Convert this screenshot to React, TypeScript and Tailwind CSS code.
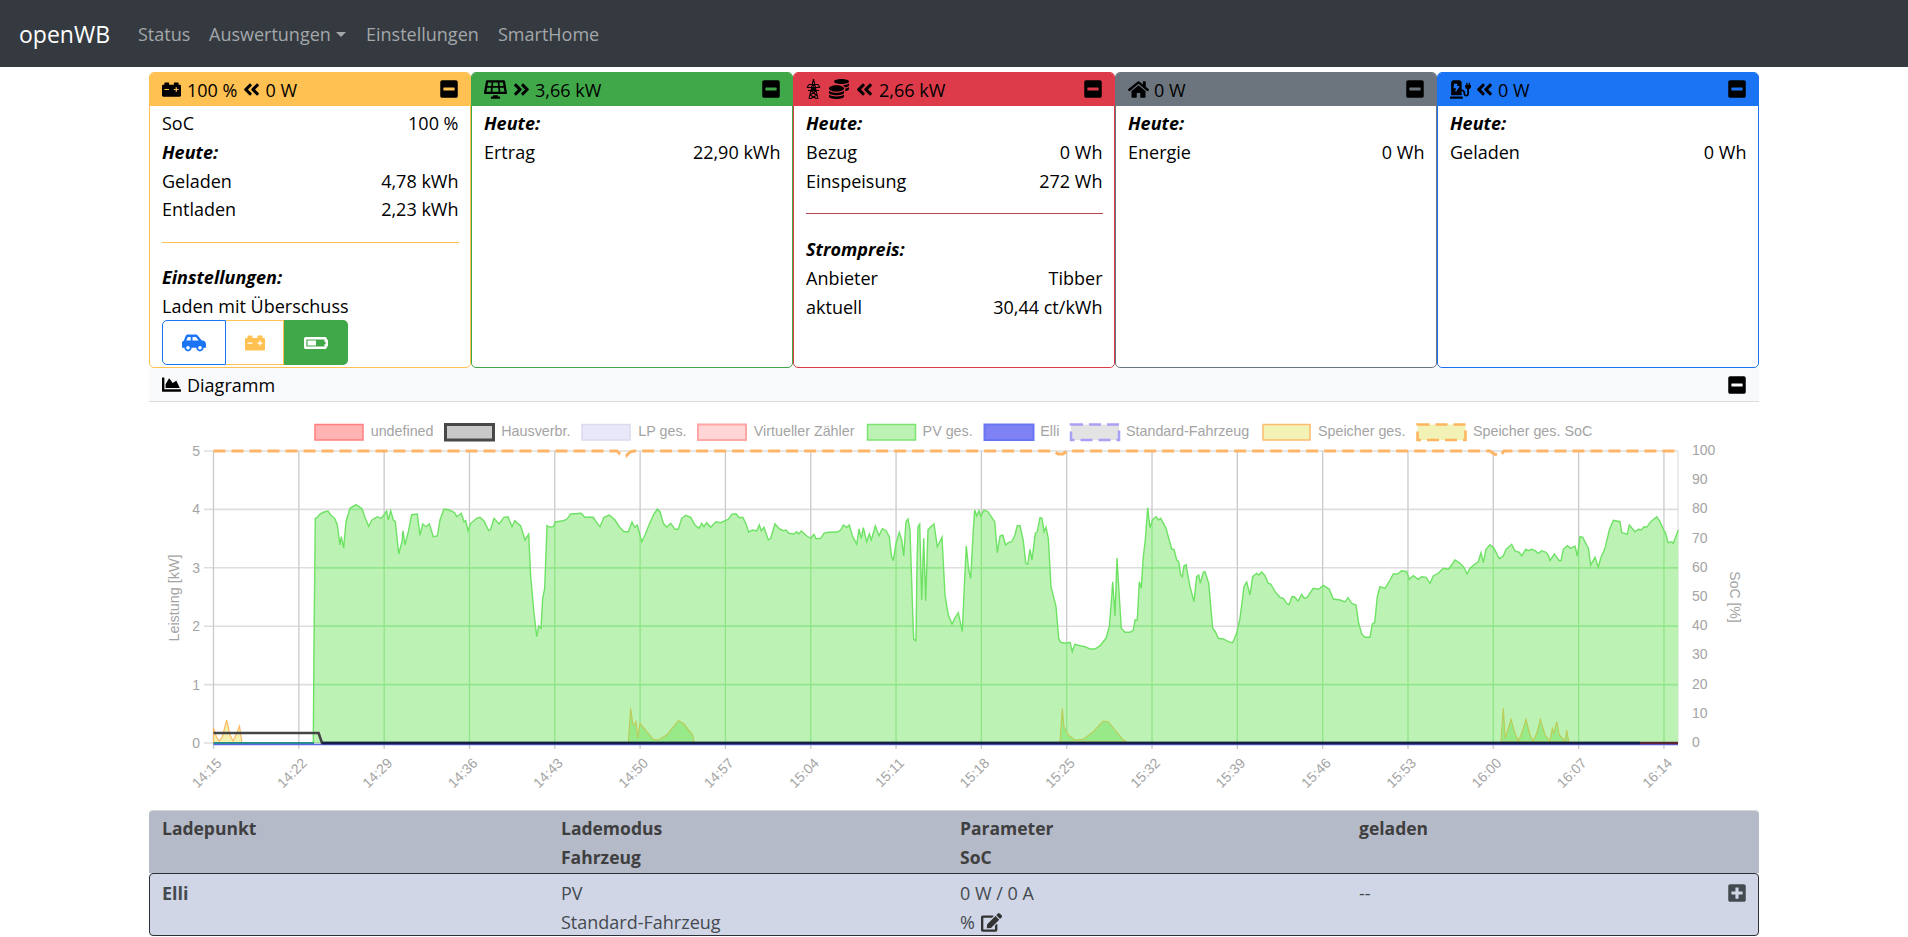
import React from "react";
import {
  FaCarBattery, FaAngleDoubleLeft, FaAngleDoubleRight, FaSolarPanel, FaCoins, FaHome,
  FaChargingStation, FaMinusSquare, FaPlusSquare, FaEdit, FaChartArea, FaCarSide, FaBatteryHalf,
} from "react-icons/fa";

type P = [number, number];
const conv = (pts: number[][], ox: number, oy: number): P[] => pts.map(([X, Y]) => [ox + X / 3, oy + Y / 3]);
const toPath = (p: P[]) => p.map(([x, y], i) => `${i ? "L" : "M"}${x.toFixed(1)} ${y.toFixed(1)}`).join("");

const pvA = [[40,999],[42,700],[46,325],[52,322],[60,312],[72,306],[84,303],[92,315],[104,325],[112,345],[120,405],[124,380],[131,414],[138,335],[150,295],[168,284],[186,296],[196,325],[206,349],[216,330],[232,320],[244,325],[260,303],[265,330],[272,302],[280,330],[286,334],[296,432],[306,395],[309,362],[315,405],[325,365],[335,314],[352,312],[360,376],[368,342],[378,350],[388,342],[400,380],[412,378],[420,330],[432,297],[448,300],[464,308],[470,320],[484,310],[492,335],[497,332],[504,362],[512,340],[530,325],[540,322],[552,333],[566,362],[572,358],[582,325],[597,342],[612,322],[624,320],[636,350],[644,332],[662,348],[675,390],[686,373],[692,500],[702,610],[710,680],[716,648],[723,655],[728,565],[734,535],[741,347],[750,352],[760,350],[766,336],[790,332],[800,328],[812,312],[844,310],[854,322],[880,322],[890,338],[900,350],[912,322],[928,315],[945,330],[958,350],[972,365],[985,365],[996,336],[1004,352],[1012,345],[1025,395],[1035,375],[1045,350],[1060,315],[1072,297],[1080,305],[1090,340],[1100,352],[1112,340],[1125,358],[1135,358],[1145,325],[1157,316],[1172,322],[1185,345],[1197,355]];
const pvB = [[65,130],[72,140],[80,128],[92,142],[108,125],[122,128],[135,122],[145,118],[155,103],[168,101],[178,113],[188,112],[197,130],[206,156],[218,150],[230,153],[238,135],[244,152],[252,142],[265,180],[272,175],[285,132],[298,146],[310,152],[318,150],[326,160],[342,162],[350,155],[356,162],[364,153],[380,168],[392,175],[402,163],[408,176],[422,175],[432,160],[445,157],[472,156],[482,150],[490,135],[500,142],[508,135],[518,170],[530,192],[537,147],[544,175],[550,143],[560,185],[568,162],[574,180],[586,138],[597,167],[607,146],[618,152],[628,170],[634,225],[640,242],[648,190],[658,157],[665,180],[671,228],[678,125],[684,117],[690,150],[698,400],[701,478],[708,482],[711,250],[714,140],[719,132],[725,360],[731,175],[737,362],[744,150],[752,140],[762,132],[772,200],[786,172],[795,345],[805,405],[816,432],[826,412],[835,398],[847,455],[853,320],[859,198],[866,270],[872,295],[880,150],[884,90],[890,108],[897,92],[902,108],[912,90],[924,95],[944,125],[952,218],[960,168],[968,165],[977,195],[985,188],[995,185],[1005,165],[1012,137],[1020,137],[1030,182],[1037,250],[1043,252],[1050,208],[1056,240],[1066,160],[1072,155],[1080,113],[1086,115],[1092,155],[1098,142],[1105,175],[1113,320],[1128,380],[1136,475],[1142,487],[1155,490],[1170,487],[1177,515],[1184,493],[1200,497]];
const pvC = [[75,500],[90,507],[105,507],[120,497],[138,475],[148,440],[155,350],[158,305],[165,408],[171,234],[178,350],[184,445],[195,457],[210,457],[220,450],[225,420],[232,420],[238,305],[244,325],[250,230],[256,180],[263,83],[270,143],[278,118],[288,110],[295,120],[302,115],[318,145],[335,207],[342,208],[350,240],[356,245],[362,285],[367,290],[372,258],[378,254],[390,320],[402,365],[410,290],[416,285],[421,310],[430,277],[435,275],[446,310],[458,445],[466,455],[475,475],[490,477],[505,485],[518,488],[530,460],[540,415],[552,320],[560,306],[570,345],[578,290],[590,280],[596,285],[605,276],[615,287],[625,310],[632,312],[645,335],[660,352],[670,355],[680,370],[687,374],[696,350],[703,350],[714,363],[725,343],[733,355],[741,352],[760,325],[776,328],[790,316],[808,328],[820,357],[840,360],[855,366],[864,353],[875,370],[888,375],[896,430],[905,462],[915,472],[930,472],[937,432],[944,428],[952,350],[960,320],[975,325],[990,300],[1000,282],[1012,282],[1025,272],[1040,275],[1048,298],[1060,287],[1075,298],[1085,290],[1098,292],[1110,310],[1120,288],[1135,280],[1150,265],[1165,268],[1175,255],[1185,240],[1200,250]];
const pvD = [[192,262],[201,282],[210,265],[225,252],[235,245],[243,218],[250,248],[258,208],[270,194],[282,205],[298,236],[310,228],[318,208],[335,193],[345,213],[358,217],[365,228],[377,208],[385,212],[395,208],[405,212],[415,220],[425,212],[438,217],[445,225],[450,242],[463,222],[478,242],[483,242],[490,208],[502,197],[512,205],[525,198],[532,228],[540,170],[548,172],[565,205],[572,255],[585,232],[595,262],[602,235],[615,205],[628,150],[640,121],[660,125],[665,158],[675,160],[682,163],[688,135],[705,155],[715,148],[724,150],[732,140],[740,142],[752,125],[770,110],[780,125],[792,152],[797,160],[804,188],[815,185],[820,190],[835,150]];

const pvLine: P[] = [...conv(pvA, 300, 410), ...conv(pvB, 680, 480), ...conv(pvC, 1060, 480), ...conv(pvD, 1400, 480)];
const pvArea = toPath(pvLine) + "L1678 743L313.3 743Z";

const hump0: P[] = [[213.5,743],[213.5,728],[216.5,737],[219,741],[222,738],[226.7,720],[230,735],[233,741],[236,735],[239.5,726],[242,743]];
const hump1 = conv([[985,999],[992,895],[998,940],[1003,945],[1008,935],[1013,985],[1020,940],[1040,965],[1060,988],[1075,990],[1100,975],[1135,932],[1150,940],[1178,975],[1183,999]], 300, 410);
const hump2 = conv([[0,785],[7,685],[12,740],[25,765],[45,780],[70,778],[100,755],[130,723],[145,725],[165,750],[190,780],[200,785]], 1060, 480);
const hump3 = conv([[303,785],[310,685],[316,775],[333,718],[345,760],[355,783],[365,760],[378,718],[390,765],[400,783],[410,760],[421,718],[435,765],[450,783],[457,745],[462,760],[470,725],[478,765],[495,783],[500,750],[506,785]], 1400, 480);

const gridY = [451, 509.4, 567.8, 626.2, 684.6, 743];
const times = ["14:15","14:22","14:29","14:36","14:43","14:50","14:57","15:04","15:11","15:18","15:25","15:32","15:39","15:46","15:53","16:00","16:07","16:14"];
const gridX = times.map((_, i) => 213.5 + i * 85.32);

const legend = [
  { x: 315, w: 48, fill: "#ffb3b3", stroke: "#ff7f7f", sw: 1.5, t: "undefined", tx: 370.7 },
  { x: 445.5, w: 48, fill: "#c9c9c9", stroke: "#484848", sw: 3, t: "Hausverbr.", tx: 501.3 },
  { x: 582, w: 48, fill: "#e9e7fa", stroke: "#dcdaf0", sw: 1.5, t: "LP ges.", tx: 638.3 },
  { x: 698, w: 48, fill: "#ffd5d5", stroke: "#ffa6a6", sw: 2, t: "Virtueller Zähler", tx: 753.8 },
  { x: 867.5, w: 48, fill: "#bdf2b5", stroke: "#7ce373", sw: 1.5, t: "PV ges.", tx: 922.6 },
  { x: 984.5, w: 49, fill: "#7f82f4", stroke: "#6a75f2", sw: 2, t: "Elli", tx: 1040.3 },
  { x: 1071, w: 48, fill: "#e3e3e3", stroke: "#a99ff5", sw: 2.5, t: "Standard-Fahrzeug", tx: 1126, dash: "12 6" },
  { x: 1263, w: 47, fill: "#f2f2b6", stroke: "#fdbb6e", sw: 1.5, t: "Speicher ges.", tx: 1318 },
  { x: 1417.5, w: 48, fill: "#f2f2b6", stroke: "#fdb55e", sw: 2.5, t: "Speicher ges. SoC", tx: 1473, dash: "12 6" },
];

function Chart() {
  const txt = "#a4a4a4";
  const f = "'Liberation Sans', Arial, sans-serif";
  return (
    <svg width={1610} height={408} viewBox="149 402 1610 408" className="block" style={{ fontFamily: f }}>
      <defs>
        <clipPath id="pvclip"><path d={pvArea} /></clipPath>
      </defs>
      {legend.map((l) => (
        <g key={l.t}>
          <rect x={l.x} y={424.5} width={l.w} height={15.5} fill={l.fill} stroke={l.stroke} strokeWidth={l.sw} strokeDasharray={l.dash} />
          <text x={l.tx} y={436} fontSize={14.3} fill={txt}>{l.t}</text>
        </g>
      ))}
      {gridY.map((y) => <line key={y} x1={204} x2={1678} y1={y} y2={y} stroke="#dedede" strokeWidth={1.6} />)}
      {gridX.map((x) => <line key={x} x1={x} x2={x} y1={451} y2={749} stroke="#cacaca" strokeWidth={1.3} />)}
      <line x1={1678} x2={1678} y1={451} y2={743} stroke="#d8d8d8" strokeWidth={1} />
      <path d={toPath(hump0) + "Z"} fill="#f3f0b0" stroke="#fdb964" strokeWidth={1.2} />
      <path d={pvArea} fill="#bdf2b5" />
      <g clipPath="url(#pvclip)">
        {gridY.map((y) => <line key={y} x1={204} x2={1678} y1={y} y2={y} stroke="#94e68e" strokeWidth={1.8} />)}
        {gridX.map((x) => <line key={x} x1={x} x2={x} y1={451} y2={749} stroke="#8fe488" strokeWidth={1.3} />)}
      </g>
      <path d={toPath(pvLine)} fill="none" stroke="#6ee264" strokeWidth={1.4} />
      {[hump1, hump2, hump3].map((h, i) => (
        <path key={i} d={toPath(h) + "Z"} fill="#98ea88" stroke="#bccb55" strokeWidth={1.1} />
      ))}
      <path d="M213.5 451L617 451L620 454L626 456L630 452L634 451L1054 451L1058 454L1063 454L1067 451L1490 451L1494 454L1500 456L1504 451L1678 451" fill="none" stroke="#fdb669" strokeWidth={3} strokeDasharray="12 6" />
      <line x1={213.5} x2={1678} y1={744.5} y2={744.5} stroke="#5f66e6" strokeWidth={1.5} />
      <line x1={213.5} x2={314} y1={743} y2={743} stroke="#2a8a90" strokeWidth={2} />
      <path d="M213.5 733L318.6 733L322 743L1640 743" fill="none" stroke="#444444" strokeWidth={2.6} />
      <line x1={322} x2={1640} y1={743} y2={743} stroke="#14204a" strokeWidth={2.6} />
      <line x1={1640} x2={1678} y1={743} y2={743} stroke="#5a2532" strokeWidth={2.6} />
      {[5,4,3,2,1,0].map((v, i) => (
        <text key={v} x={200} y={gridY[i] + 5} textAnchor="end" fontSize={14} fill={txt}>{v}</text>
      ))}
      {[100,90,80,70,60,50,40,30,20,10,0].map((v, i) => (
        <text key={v} x={1692} y={455 + i * 29.2} fontSize={14} fill={txt}>{v}</text>
      ))}
      <text transform="translate(179 598) rotate(-90)" textAnchor="middle" fontSize={14.4} fill={txt}>Leistung [kW]</text>
      <text transform="translate(1730 597) rotate(90)" textAnchor="middle" fontSize={14} fill={txt}>SoC [%]</text>
      {times.map((t, i) => (
        <text key={t} transform={`translate(${gridX[i] + 9} 764) rotate(-45)`} textAnchor="end" fontSize={14} fill={txt}>{t}</text>
      ))}
    </svg>
  );
}

function Tower() {
  return (
    <svg width="15" height="20" viewBox="0 0 15 20" fill="none" stroke="black" strokeWidth="1.1" className="shrink-0">
      <path d="M7.5 0L3 20M7.5 0L12 20M3 5.5H12M1 8.5H14M2 11.5H13M5.8 5.5L9.2 8.5M9.2 5.5L5.8 8.5M5.2 8.5L9.8 11.5M9.8 8.5L5.2 11.5M4.8 11.5L10.4 16M10.2 11.5L4.6 16M4.2 16L11 20M10.8 16L4 20M1 8.5L3 5.5M14 8.5L12 5.5" />
    </svg>
  );
}

function Row({ l, r }: { l: string; r: string }) {
  return (
    <div className="flex justify-between h-[28.8px]">
      <span>{l}</span>
      <span>{r}</span>
    </div>
  );
}

function Bold({ children }: { children: React.ReactNode }) {
  return <div className="h-[28.8px] font-bold italic">{children}</div>;
}

function T({ children, className }: { children: React.ReactNode; className: string }) {
  return <span className={`pt-[2px] ${className}`}>{children}</span>;
}

function Card({ head, border, bg, children }: { head: React.ReactNode; border: string; bg: string; children?: React.ReactNode }) {
  return (
    <div className={`flex flex-col rounded-[5px] border overflow-hidden ${border}`}>
      <div className={`h-[33px] shrink-0 flex items-center pt-[1px] pl-[12px] pr-[11px] border-b ${border} ${bg}`}>
        <div className="flex items-center flex-1 min-w-0">{head}</div>
        <FaMinusSquare size={20} className="shrink-0 mb-[2px]" />
      </div>
      <div className="pt-[3px] pl-[12px] pr-[11.5px]">{children}</div>
    </div>
  );
}

export default function App() {
  return (
    <div className="h-[937px] overflow-hidden bg-white text-black text-[18px] leading-[28.8px] font-['Open_Sans','Noto_Sans',sans-serif]">
      <nav className="h-[67px] bg-[#343a40] flex items-center pt-[2px] pl-[19px] text-[18px] text-[#a4a7aa]">
        <span className="w-[119px] text-white text-[23px]">openWB</span>
        <span className="w-[71px]">Status</span>
        <span className="w-[157px] flex items-center">
          Auswertungen
          <span className="ml-[5px] border-x-[5px] border-x-transparent border-t-[5.5px] border-t-[#a4a7aa]" />
        </span>
        <span className="w-[132px]">Einstellungen</span>
        <span>SmartHome</span>
      </nav>
      <main className="w-[1610px] ml-[149px] mt-[5px]">
        <div className="grid grid-cols-5 h-[296px]">
          <Card border="border-[#ffc252]" bg="bg-[#ffc252]" head={<>
            <FaCarBattery size={19} />
            <T className="ml-[6px]">100 %</T>
            <FaAngleDoubleLeft size={19} className="ml-[5px]" />
            <T className="ml-[4px]">0 W</T>
          </>}>
            <Row l="SoC" r="100 %" />
            <Bold>Heute:</Bold>
            <Row l="Geladen" r="4,78 kWh" />
            <Row l="Entladen" r="2,23 kWh" />
            <div className="mt-[18px] mb-[20px] h-px bg-[#ffc252]" />
            <Bold>Einstellungen:</Bold>
            <div className="h-[28.8px]">Laden mit Überschuss</div>
            <div className="flex h-[45px] mt-[-0.5px]">
              <div className="w-[64px] flex items-center justify-center border border-[#1b74f4] rounded-l-[5px]">
                <FaCarSide size={24} className="text-[#1b74f4]" />
              </div>
              <div className="w-[58px] flex items-center justify-center border-y border-r border-[#ffc252]">
                <FaCarBattery size={20} className="text-[#ffc252]" />
              </div>
              <div className="w-[64px] flex items-center justify-center bg-[#40a849] rounded-r-[5px]">
                <FaBatteryHalf size={24} className="text-white" />
              </div>
            </div>
          </Card>
          <Card border="border-[#40a849]" bg="bg-[#40a849]" head={<>
            <FaSolarPanel size={23} />
            <FaAngleDoubleRight size={19} className="ml-[5px]" />
            <T className="ml-[4px]">3,66 kW</T>
          </>}>
            <Bold>Heute:</Bold>
            <Row l="Ertrag" r="22,90 kWh" />
          </Card>
          <Card border="border-[#dd3b49]" bg="bg-[#dd3b49]" head={<>
            <Tower />
            <FaCoins size={20} className="ml-[8px]" />
            <FaAngleDoubleLeft size={19} className="ml-[6px]" />
            <T className="ml-[5px]">2,66 kW</T>
          </>}>
            <Bold>Heute:</Bold>
            <Row l="Bezug" r="0 Wh" />
            <Row l="Einspeisung" r="272 Wh" />
            <div className="mt-[18px] mb-[21px] h-px bg-[#b8444f]" />
            <Bold>Strompreis:</Bold>
            <Row l="Anbieter" r="Tibber" />
            <Row l="aktuell" r="30,44 ct/kWh" />
          </Card>
          <Card border="border-[#6c757d]" bg="bg-[#6c757d]" head={<>
            <FaHome size={21} />
            <T className="ml-[5px]">0 W</T>
          </>}>
            <Bold>Heute:</Bold>
            <Row l="Energie" r="0 Wh" />
          </Card>
          <Card border="border-[#1b74f4]" bg="bg-[#1b74f4]" head={<>
            <FaChargingStation size={21} />
            <FaAngleDoubleLeft size={19} className="ml-[4px]" />
            <T className="ml-[4px]">0 W</T>
          </>}>
            <Bold>Heute:</Bold>
            <Row l="Geladen" r="0 Wh" />
          </Card>
        </div>
        <div className="h-[34px] bg-[#f8f9fa] border-b border-[#dcdcdc] flex items-center pl-[13px] pr-[12px]">
          <FaChartArea size={19} />
          <span className="ml-[6px] flex-1 pt-[2px]">Diagramm</span>
          <FaMinusSquare size={20} />
        </div>
        <Chart />
        <div className="h-[63px] bg-[#b5bac9] rounded-t-[4px] border-t border-[#d8d8d8] pl-[13px] pt-[3px] font-bold text-[#3f3f3f] grid grid-cols-[399px_399px_399px_1fr] auto-rows-[29px] text-[17.5px]">
          <span>Ladepunkt</span><span>Lademodus</span><span>Parameter</span><span>geladen</span>
          <span /><span>Fahrzeug</span><span>SoC</span><span />
        </div>
        <div className="h-[63px] bg-[#d0d6e6] rounded-[4px] border border-[#2c2f36] pl-[12px] pr-[11px] pt-[5px] text-[#454a50] grid grid-cols-[399px_399px_399px_1fr] auto-rows-[28.8px]">
          <span className="font-bold">Elli</span>
          <span>PV</span>
          <span>0 W / 0 A</span>
          <span className="flex items-center justify-between">--<FaPlusSquare size={20} /></span>
          <span />
          <span>Standard-Fahrzeug</span>
          <span className="flex items-center">%<FaEdit size={21} className="ml-[6px] text-[#333]" /></span>
          <span />
        </div>
      </main>
    </div>
  );
}
